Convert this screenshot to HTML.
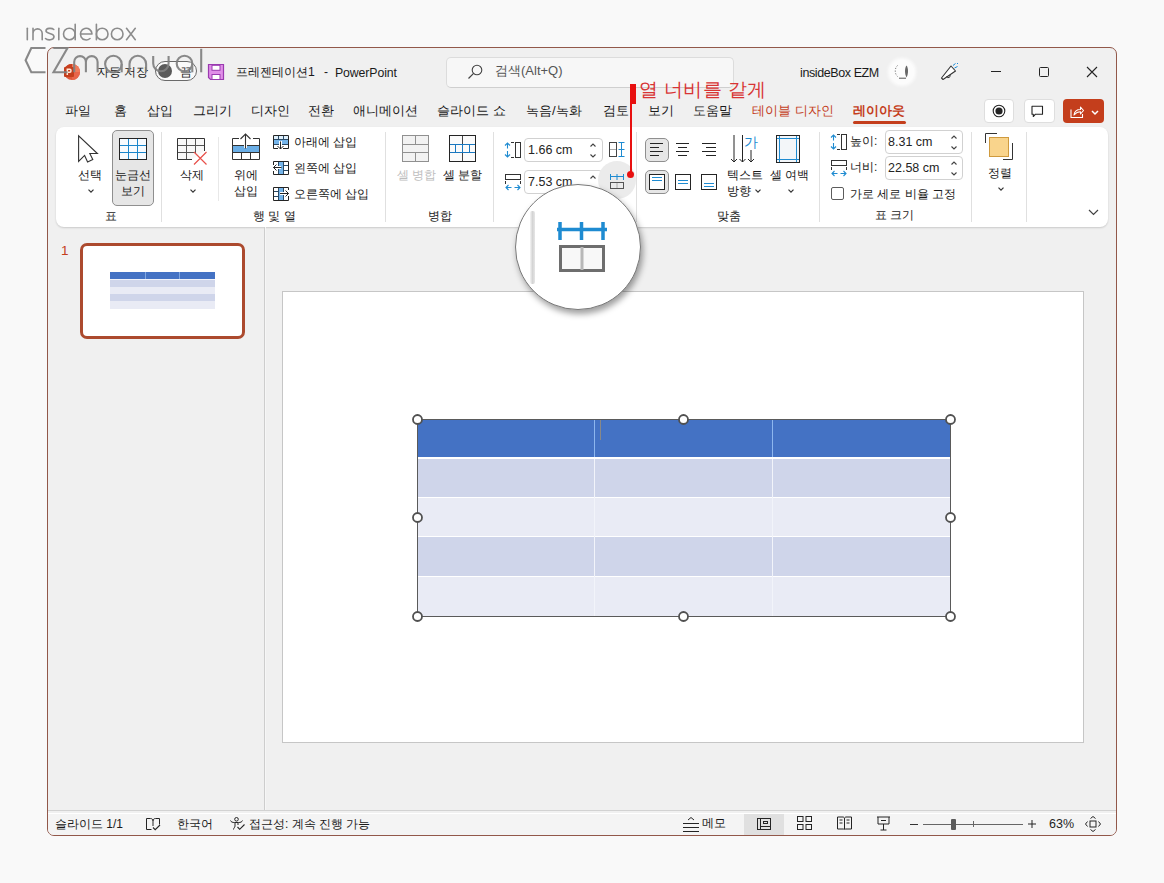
<!DOCTYPE html>
<html><head><meta charset="utf-8">
<style>
*{box-sizing:border-box;margin:0;padding:0}
html,body{width:1164px;height:883px;overflow:hidden;background:#f9f9f9;font-family:"Liberation Sans",sans-serif;color:#1a1a1a}
.a{position:absolute}
.t{position:absolute;white-space:nowrap;font-size:13px;line-height:16px}
.s{position:absolute;white-space:nowrap;font-size:12px;line-height:14px;color:#1a1a1a}
#win{position:absolute;left:47px;top:47px;width:1070px;height:789px;border:1px solid #92584a;border-radius:7px;background:#f0f0f0;overflow:hidden}
#ribbon{position:absolute;left:56px;top:127px;width:1052px;height:100px;background:#fff;border-radius:8px;box-shadow:0 1px 2px rgba(0,0,0,.16)}
.sep{position:absolute;width:1px;background:#e0e0e0}
svg{position:absolute;overflow:visible}
.inp{position:absolute;background:#fff;border:1px solid #d1d1d1;border-radius:4px}
.chev{position:absolute;width:4.5px;height:4.5px;border-right:1.2px solid #424242;border-bottom:1.2px solid #424242;transform:rotate(45deg)}
</style></head><body>
<div id="win"></div>

<!-- ===== TITLE BAR ===== -->
<svg style="left:63px;top:63px" width="18" height="18" viewBox="0 0 18 18">
 <circle cx="9" cy="9" r="8" fill="#e0583a"/>
 <path d="M9 1 A8 8 0 0 1 17 9 L9 9Z" fill="#f07a5a"/>
 <path d="M17 9 A8 8 0 0 1 9 17 L9 9Z" fill="#e8654a"/>
 <path d="M9 1 A8 8 0 0 0 1.5 6 L9 9Z" fill="#c9401f"/>
 <rect x="1" y="4" width="10" height="10" rx="1" fill="#c43e1c"/>
 <path d="M4.3 12 V6.3 H6.8 C8.4 6.3 8.4 9.3 6.8 9.3 H4.3" fill="none" stroke="#ffe8d8" stroke-width="1.5"/>
</svg>
<div class="t" style="left:97px;top:63.5px;font-size:12px">자동 저장</div>
<div class="a" style="left:155px;top:61px;width:42px;height:20px;border:1px solid #6a6a6a;border-radius:10px;background:#fafafa"></div>
<div class="a" style="left:158px;top:64px;width:14px;height:14px;border-radius:7px;background:#5a5a5a"></div>
<div class="t" style="left:179.5px;top:63.5px;font-size:12px">끔</div>
<svg style="left:207px;top:63px" width="18" height="18" viewBox="0 0 18 18">
 <path d="M1.5 1.5 H16.5 V16.5 H3.5 L1.5 14.5Z" fill="#e08ee8" stroke="#9a3ab0" stroke-width="1.2"/>
 <rect x="5" y="2.3" width="8" height="5" fill="#fff" stroke="#9a3ab0" stroke-width="1"/>
 <rect x="5" y="11.5" width="8" height="5" fill="#fff" stroke="#9a3ab0" stroke-width="1"/>
</svg>
<div class="t" style="left:236px;top:64px;font-size:12.2px">프레젠테이션1</div><div class="t" style="left:324px;top:64px;font-size:12px">-</div><div class="t" style="left:335px;top:65px;font-size:12.3px;letter-spacing:-0.1px">PowerPoint</div>

<div class="a" style="left:446px;top:57px;width:288px;height:31px;background:#f7f7f7;border:1px solid #dcdcdc;border-bottom-color:#cfcfcf;border-radius:5px"></div>
<svg style="left:467px;top:64px" width="16" height="16" viewBox="0 0 16 16">
 <circle cx="10" cy="6" r="4.8" fill="none" stroke="#424242" stroke-width="1.1"/>
 <path d="M6.6 9.4 L1.5 14.5" stroke="#424242" stroke-width="1.2"/>
</svg>
<div class="t" style="left:495px;top:62.5px;color:#555">검색(Alt+Q)</div>

<div class="t" style="left:800px;top:64.8px;font-size:12.5px;letter-spacing:-0.4px">insideBox EZM</div>
<div class="a" style="left:890px;top:60px;width:24px;height:24px;border-radius:12px;background:#fcfcfc;box-shadow:0 0 3px 2px #fcfcfc"></div>
<svg style="left:894px;top:64px" width="18" height="16" viewBox="0 0 18 16">
 <path d="M3.5 1.5 C0.5 4.5 0.5 9.5 3.5 12.5" fill="none" stroke="#777" stroke-width="1" stroke-dasharray="1.2 1.6"/>
 <path d="M5 14.2 H12" stroke="#555" stroke-width="1"/>
 <path d="M12.5 1.5 C14.5 4 14.5 10 12.5 13.5 C10.5 10 10.5 4 12.5 1.5Z" fill="#666"/>
</svg>
<svg style="left:940px;top:63px" width="20" height="18" viewBox="0 0 20 18">
 <path d="M1.5 15 L11 3 L15.5 8 L3 16.5 Z" fill="#fff" stroke="#333" stroke-width="1.1" stroke-linejoin="round"/>
 <path d="M6.5 13.5 A1.8 1.8 0 0 0 10 12" fill="none" stroke="#333" stroke-width="1"/>
 <path d="M13 2.5 L15.5 0.5 M14.5 5 L17.5 3.5 M17 1 L18 0" stroke="#1a8bd8" stroke-width="1"/>
</svg>
<div class="a" style="left:991px;top:70.6px;width:10px;height:1.2px;background:#242424"></div>
<div class="a" style="left:1039px;top:67px;width:10px;height:10px;border:1.2px solid #242424;border-radius:1.5px"></div>
<svg style="left:1087px;top:67px" width="10" height="10" viewBox="0 0 10 10"><path d="M0 0 L10 10 M10 0 L0 10" stroke="#242424" stroke-width="1.1"/></svg>

<!-- ===== MENU TABS ===== -->
<div class="t" style="left:65px;top:103px">파일</div>
<div class="t" style="left:114px;top:103px">홈</div>
<div class="t" style="left:147px;top:103px">삽입</div>
<div class="t" style="left:193px;top:103px">그리기</div>
<div class="t" style="left:251px;top:103px">디자인</div>
<div class="t" style="left:308px;top:103px">전환</div>
<div class="t" style="left:353px;top:103px">애니메이션</div>
<div class="t" style="left:437px;top:103px">슬라이드 쇼</div>
<div class="t" style="left:526px;top:103px">녹음/녹화</div>
<div class="t" style="left:603px;top:103px">검토</div>
<div class="t" style="left:648px;top:103px">보기</div>
<div class="t" style="left:693px;top:103px">도움말</div>
<div class="t" style="left:752px;top:103px;color:#c43e1c">테이블 디자인</div>
<div class="t" style="left:853px;top:103px;color:#c43e1c;font-weight:bold">레이아웃</div>
<div class="a" style="left:853px;top:121px;width:53px;height:3px;border-radius:2px;background:#c43e1c"></div>

<div class="a" style="left:984px;top:99px;width:30px;height:24px;background:#fff;border:1px solid #dedede;border-radius:4px"></div>
<svg style="left:992px;top:104px" width="14" height="14" viewBox="0 0 14 14"><circle cx="7" cy="7" r="5.8" fill="none" stroke="#242424" stroke-width="1.1"/><circle cx="7" cy="7" r="3.6" fill="#242424"/></svg>
<div class="a" style="left:1024px;top:99px;width:31px;height:24px;background:#fff;border:1px solid #dedede;border-radius:4px"></div>
<svg style="left:1031px;top:105px" width="13" height="13" viewBox="0 0 13 13"><path d="M1 1.2 H11.5 V9.2 H4.5 L2.3 11.5 V9.2 H1Z" fill="none" stroke="#242424" stroke-width="1.1" stroke-linejoin="round"/></svg>
<div class="a" style="left:1063px;top:99px;width:41px;height:24px;background:#c43e1c;border-radius:4px"></div>
<svg style="left:1070px;top:104px" width="32" height="16" viewBox="0 0 32 16">
 <path d="M1 5.5 V13.5 H12.5 V10" fill="none" stroke="#fff" stroke-width="1.1"/>
 <path d="M4 11 C4.5 7.5 7 5.5 10.5 5.5 V3 L13.5 6.5 L10.5 10 V7.8 C8 7.8 5.8 9 4 11Z" fill="none" stroke="#fff" stroke-width="1.1" stroke-linejoin="round"/>
 <path d="M22 7 L25 10 L28 7" fill="none" stroke="#fff" stroke-width="1.5"/>
</svg>

<!-- ===== RIBBON ===== -->
<div id="ribbon"></div>
<!-- group 표 -->
<svg style="left:77px;top:135px" width="22" height="29" viewBox="0 0 22 29">
 <path d="M1.6 0.8 L1.6 26.4 L7.6 20.4 L10.6 27 L15.8 24.6 L12.8 18.5 L20.4 18.5 Z" fill="#fff" stroke="#333" stroke-width="1.1" stroke-linejoin="miter"/>
</svg>
<div class="s" style="left:78px;top:168px">선택</div>
<svg style="left:87.6px;top:188.5px" width="6" height="4" viewBox="0 0 6 4"><path d="M0.5 0.7 L3 3.2 L5.5 0.7" fill="none" stroke="#333" stroke-width="1.2"/></svg>
<div class="a" style="left:112px;top:130px;width:42px;height:76px;background:#e6e6e6;border:1px solid #8f8f8f;border-radius:5px"></div>
<svg style="left:119px;top:138px" width="29" height="23" viewBox="0 0 29 23">
 <rect x="0.5" y="0.5" width="27" height="21" fill="#f7fbff" stroke="#242424" stroke-width="1"/>
 <path d="M1 7.5 H27 M1 14.5 H27 M9.5 1 V21 M18.5 1 V21" stroke="#1a86cc" stroke-width="1"/>
</svg>
<div class="s" style="left:115px;top:168px">눈금선</div>
<div class="s" style="left:121px;top:184px">보기</div>
<div class="s" style="left:105px;top:209px">표</div>
<div class="sep" style="left:161px;top:132px;height:90px"></div>

<!-- group 행 및 열 -->
<svg style="left:177px;top:138px" width="32" height="28" viewBox="0 0 32 28">
 <path d="M15 21.5 H0.5 V0.5 H27.5 V13" fill="#f8f8f8" stroke="#333" stroke-width="1"/>
 <path d="M1 7.5 H27 M1 14.5 H19 M9.5 1 V21 M18.5 1 V16" stroke="#555" stroke-width="1"/>
 <path d="M17 14 L29.5 26.5 M29.5 14 L17 26.5" stroke="#e8504a" stroke-width="1.2"/>
</svg>
<div class="s" style="left:180px;top:168px">삭제</div>
<svg style="left:189.6px;top:188.5px" width="6" height="4" viewBox="0 0 6 4"><path d="M0.5 0.7 L3 3.2 L5.5 0.7" fill="none" stroke="#333" stroke-width="1.2"/></svg>
<div class="sep" style="left:218px;top:137px;height:64px;background:#e8e8e8"></div>
<svg style="left:232px;top:133px" width="28" height="27" viewBox="0 0 28 27">
 <path d="M0.5 26.5 V5.5 H7 M21 5.5 H27.5 V26.5 H0.5" fill="none" stroke="#333" stroke-width="1"/>
 <rect x="0.5" y="12.5" width="27" height="7" fill="#6aaee6" stroke="#333" stroke-width="1"/>
 <path d="M9.5 19.5 V26.5 M18.5 19.5 V26.5" stroke="#333" stroke-width="1"/>
 <path d="M13.5 15 V1.5" stroke="#fff" stroke-width="3"/>
 <path d="M13.5 15.5 V1 M8.5 6 L13.5 1 L18.5 6" fill="none" stroke="#333" stroke-width="1.1"/>
</svg>
<div class="s" style="left:234px;top:168px">위에</div>
<div class="s" style="left:234px;top:184px">삽입</div>
<svg style="left:273px;top:135px" width="16" height="15" viewBox="0 0 16 15">
 <rect x="1" y="1" width="14" height="3.5" fill="#dff0fc"/>
 <rect x="1" y="4.5" width="14" height="5" fill="#74b4ea"/>
 <path d="M5 13.5 H0.5 V0.5 H15.5 V13.5 H10" fill="none" stroke="#242424" stroke-width="1"/>
 <path d="M1 4.5 H15 M1 9.5 H15 M5.5 1 V4.5 M10.5 1 V4.5" stroke="#2a4a66" stroke-width="1"/>
 <path d="M7.5 6 V13.5" stroke="#fff" stroke-width="3"/>
 <path d="M7.5 6.5 V14 M4.5 11 L7.5 14 L10.5 11" fill="none" stroke="#242424" stroke-width="1"/>
</svg>
<div class="s" style="left:294px;top:135px">아래에 삽입</div>
<svg style="left:273px;top:161px" width="16" height="14" viewBox="0 0 16 14">
 <rect x="5" y="1" width="5" height="12" fill="#74b4ea"/>
 <path d="M0.5 4 V0.5 H15.5 V13.5 H0.5 V10" fill="none" stroke="#242424" stroke-width="1"/>
 <path d="M5.5 1 V13 M10.5 1 V13 M10.5 4.5 H15 M10.5 9.5 H15" stroke="#2a4a66" stroke-width="1"/>
 <path d="M1 6.5 H8" stroke="#fff" stroke-width="3"/>
 <path d="M8.5 6.5 H0.5 M3.5 3.5 L0.5 6.5 L3.5 9.5" fill="none" stroke="#242424" stroke-width="1"/>
</svg>
<div class="s" style="left:294px;top:161px">왼쪽에 삽입</div>
<svg style="left:273px;top:187px" width="16" height="14" viewBox="0 0 16 14">
 <rect x="5.5" y="1" width="5" height="12" fill="#74b4ea"/>
 <path d="M15.5 3 V0.5 H0.5 V13.5 H15.5 V9" fill="none" stroke="#242424" stroke-width="1"/>
 <path d="M5.5 1 V13 M10.5 1 V13 M1 4.5 H5.5 M1 9.5 H5.5" stroke="#2a4a66" stroke-width="1"/>
 <path d="M7 6.5 H15" stroke="#fff" stroke-width="3"/>
 <path d="M7 6.5 H15.5 M12.5 3.5 L15.5 6.5 L12.5 9.5" fill="none" stroke="#242424" stroke-width="1"/>
</svg>
<div class="s" style="left:294px;top:187px">오른쪽에 삽입</div>
<div class="s" style="left:253px;top:209px">행 및 열</div>
<div class="sep" style="left:385px;top:132px;height:90px"></div>

<!-- group 병합 -->
<svg style="left:402px;top:135px" width="27" height="27" viewBox="0 0 27 27">
 <rect x="0.5" y="0.5" width="26" height="26" fill="#f2f2f2" stroke="#909090" stroke-width="1"/>
 <path d="M1 9.5 H26 M1 17.5 H26 M13.5 1 V9 M13.5 18 V26" stroke="#909090" stroke-width="1"/>
</svg>
<div class="s" style="left:397px;top:168px;color:#bdbdbd">셀 병합</div>
<svg style="left:449px;top:135px" width="27" height="27" viewBox="0 0 27 27">
 <rect x="0.5" y="0.5" width="26" height="26" fill="#fbfbfb" stroke="#242424" stroke-width="1"/>
 <path d="M13.5 1 V9 M13.5 18 V26" stroke="#444" stroke-width="1"/>
 <path d="M1 9.5 H26 M1 17.5 H26 M6.5 10 V17 M13.5 10 V17 M20.5 10 V17" stroke="#1a78c0" stroke-width="1"/>
</svg>
<div class="s" style="left:443px;top:168px">셀 분할</div>
<div class="s" style="left:428px;top:209px">병합</div>
<div class="sep" style="left:493px;top:132px;height:90px"></div>

<!-- group cell size -->
<svg style="left:504px;top:142px" width="18" height="17" viewBox="0 0 18 17">
 <path d="M3.5 1 V6.5 M1 3.5 L3.5 1 L6 3.5 M3.5 9 V15 M1 12.5 L3.5 15 L6 12.5" fill="none" stroke="#1e8bd1" stroke-width="1.1"/>
 <rect x="11.5" y="0.5" width="5" height="15" fill="none" stroke="#333" stroke-width="1"/>
 <path d="M7 0.5 H10 M7 15.5 H10" stroke="#333" stroke-width="1"/>
</svg>
<div class="inp" style="left:524px;top:138px;width:79px;height:24px"></div>
<div class="a" style="left:528px;top:142px;font-size:12.5px;line-height:16px;color:#242424">1.66 cm</div>
<svg style="left:590px;top:142.5px" width="6" height="4" viewBox="0 0 6 4"><path d="M0.5 3.5 L3 1 L5.5 3.5" fill="none" stroke="#424242" stroke-width="1.1"/></svg>
<svg style="left:590px;top:154px" width="6" height="4" viewBox="0 0 6 4"><path d="M0.5 0.5 L3 3 L5.5 0.5" fill="none" stroke="#424242" stroke-width="1.1"/></svg>
<svg style="left:505px;top:174px" width="17" height="16" viewBox="0 0 17 16">
 <rect x="0.5" y="0.5" width="15" height="5" fill="none" stroke="#333" stroke-width="1"/>
 <path d="M0.5 7 V10 M15.5 7 V10" stroke="#333" stroke-width="1"/>
 <path d="M1 13.5 H6.5 M3.5 11 L1 13.5 L3.5 16 M9.5 13.5 H15 M12.5 11 L15 13.5 L12.5 16" fill="none" stroke="#1e8bd1" stroke-width="1.1"/>
</svg>
<div class="inp" style="left:524px;top:170px;width:79px;height:24px"></div>
<div class="a" style="left:528px;top:174px;font-size:12.5px;line-height:16px;color:#242424">7.53 cm</div>
<svg style="left:590px;top:174.5px" width="6" height="4" viewBox="0 0 6 4"><path d="M0.5 3.5 L3 1 L5.5 3.5" fill="none" stroke="#424242" stroke-width="1.1"/></svg>
<svg style="left:609px;top:142px" width="17" height="16" viewBox="0 0 17 16">
 <rect x="0.5" y="0.5" width="7" height="14" fill="none" stroke="#444" stroke-width="1"/>
 <path d="M1 7.5 H7" stroke="#aaa" stroke-width="1"/>
 <path d="M12.5 0 V15 M9.5 0.5 H15.5 M9.5 7.5 H15.5 M9.5 14.5 H15.5" stroke="#1e8bd1" stroke-width="1"/>
</svg>
<div class="a" style="left:598px;top:161px;width:38px;height:38px;border-radius:19px;background:#ebebeb"></div>
<svg style="left:610px;top:174px" width="15" height="16" viewBox="0 0 15 16">
 <path d="M0 2.5 H14 M0.5 0 V6 M7 0 V6 M13.5 0 V6" stroke="#1e8bd1" stroke-width="1"/>
 <rect x="0.5" y="8.5" width="13" height="6" fill="none" stroke="#555" stroke-width="1"/>
 <path d="M7 9 V14" stroke="#aaa" stroke-width="1"/>
</svg>
<div class="sep" style="left:636px;top:132px;height:90px"></div>

<!-- group 맞춤 -->
<div class="a" style="left:645px;top:138px;width:24px;height:24px;background:#e6e6e6;border:1px solid #8f8f8f;border-radius:5px"></div>
<svg style="left:649px;top:143px" width="16" height="14" viewBox="0 0 16 14"><path d="M1 0.5 H14 M1 4.5 H10 M1 8.5 H14 M1 12.5 H10" stroke="#242424" stroke-width="1"/></svg>
<svg style="left:675px;top:143px" width="16" height="14" viewBox="0 0 16 14"><path d="M1 0.5 H14 M3 4.5 H12 M1 8.5 H14 M3 12.5 H12" stroke="#242424" stroke-width="1"/></svg>
<svg style="left:701px;top:143px" width="16" height="14" viewBox="0 0 16 14"><path d="M1 0.5 H15 M5 4.5 H15 M1 8.5 H15 M5 12.5 H15" stroke="#242424" stroke-width="1"/></svg>
<div class="a" style="left:645px;top:170px;width:24px;height:24px;background:#e6e6e6;border:1px solid #8f8f8f;border-radius:5px"></div>
<svg style="left:649px;top:174px" width="16" height="16" viewBox="0 0 16 16"><rect x="0.5" y="0.5" width="15" height="15" fill="#fff" stroke="#242424"/><path d="M3 3.5 H13 M3 6.5 H13" stroke="#1e8bd1"/></svg>
<svg style="left:675px;top:174px" width="16" height="16" viewBox="0 0 16 16"><rect x="0.5" y="0.5" width="15" height="15" fill="#fff" stroke="#242424"/><path d="M3 6.5 H13 M3 9.5 H13" stroke="#1e8bd1"/></svg>
<svg style="left:701px;top:174px" width="16" height="16" viewBox="0 0 16 16"><rect x="0.5" y="0.5" width="15" height="15" fill="#fff" stroke="#242424"/><path d="M3 9.5 H13 M3 12.5 H13" stroke="#1e8bd1"/></svg>
<svg style="left:729px;top:135px" width="31" height="29" viewBox="0 0 31 29">
 <path d="M5 0 V27 M2 24 L5 27 L8 24 M13.5 0 V27 M10.5 24 L13.5 27 L16.5 24 M22 15 V27 M19 24 L22 27 L25 24" fill="none" stroke="#242424" stroke-width="1"/>
 <text x="15" y="11.5" font-size="13.5" fill="#1e8bd1" font-family="Liberation Sans">가</text>
</svg>
<div class="s" style="left:727px;top:168px">텍스트</div>
<div class="s" style="left:727px;top:184px">방향</div>
<svg style="left:755px;top:189px" width="6" height="4" viewBox="0 0 6 4"><path d="M0.5 0.7 L3 3.2 L5.5 0.7" fill="none" stroke="#333" stroke-width="1.2"/></svg>
<svg style="left:776px;top:135px" width="25" height="29" viewBox="0 0 25 29">
 <rect x="0.5" y="0.5" width="23" height="27" fill="#f3f6f9" stroke="#242424" stroke-width="1"/>
 <path d="M1 3.5 H23 M1 24.5 H23 M3.5 1 V27 M20.5 1 V27" stroke="#1e8bd1" stroke-width="1"/>
</svg>
<div class="s" style="left:770px;top:168px">셀 여백</div>
<svg style="left:787.5px;top:188.5px" width="6" height="4" viewBox="0 0 6 4"><path d="M0.5 0.7 L3 3.2 L5.5 0.7" fill="none" stroke="#333" stroke-width="1.2"/></svg>
<div class="s" style="left:717px;top:209px">맞춤</div>
<div class="sep" style="left:819px;top:132px;height:90px"></div>

<!-- group 표 크기 -->
<svg style="left:830px;top:134px" width="18" height="17" viewBox="0 0 18 17">
 <path d="M3.5 1 V6.5 M1 3.5 L3.5 1 L6 3.5 M3.5 9 V15 M1 12.5 L3.5 15 L6 12.5" fill="none" stroke="#1e8bd1" stroke-width="1.1"/>
 <rect x="11.5" y="0.5" width="5" height="15" fill="none" stroke="#333" stroke-width="1"/>
 <path d="M7 0.5 H10 M7 15.5 H10" stroke="#333" stroke-width="1"/>
</svg>
<div class="s" style="left:850px;top:134px">높이:</div>
<div class="inp" style="left:885px;top:130px;width:78px;height:24px"></div>
<div class="a" style="left:888px;top:134px;font-size:12.5px;line-height:16px;color:#242424">8.31 cm</div>
<svg style="left:951px;top:134.5px" width="6" height="4" viewBox="0 0 6 4"><path d="M0.5 3.5 L3 1 L5.5 3.5" fill="none" stroke="#424242" stroke-width="1.1"/></svg>
<svg style="left:951px;top:146px" width="6" height="4" viewBox="0 0 6 4"><path d="M0.5 0.5 L3 3 L5.5 0.5" fill="none" stroke="#424242" stroke-width="1.1"/></svg>
<svg style="left:831px;top:160px" width="17" height="16" viewBox="0 0 17 16">
 <rect x="0.5" y="0.5" width="15" height="5" fill="none" stroke="#333" stroke-width="1"/>
 <path d="M0.5 7 V10 M15.5 7 V10" stroke="#333" stroke-width="1"/>
 <path d="M1 13.5 H6.5 M3.5 11 L1 13.5 L3.5 16 M9.5 13.5 H15 M12.5 11 L15 13.5 L12.5 16" fill="none" stroke="#1e8bd1" stroke-width="1.1"/>
</svg>
<div class="s" style="left:850px;top:160px">너비:</div>
<div class="inp" style="left:885px;top:156px;width:78px;height:24px"></div>
<div class="a" style="left:888px;top:160px;font-size:12.5px;line-height:16px;color:#242424">22.58 cm</div>
<svg style="left:951px;top:160.5px" width="6" height="4" viewBox="0 0 6 4"><path d="M0.5 3.5 L3 1 L5.5 3.5" fill="none" stroke="#424242" stroke-width="1.1"/></svg>
<svg style="left:951px;top:172px" width="6" height="4" viewBox="0 0 6 4"><path d="M0.5 0.5 L3 3 L5.5 0.5" fill="none" stroke="#424242" stroke-width="1.1"/></svg>
<div class="a" style="left:831px;top:187px;width:13px;height:13px;border:1px solid #5c5c5c;border-radius:2px;background:#fff"></div>
<div class="s" style="left:850px;top:187px">가로 세로 비율 고정</div>
<div class="s" style="left:875px;top:208px">표 크기</div>
<div class="sep" style="left:971px;top:132px;height:90px"></div>

<!-- 정렬 -->
<svg style="left:985px;top:133px" width="29" height="28" viewBox="0 0 29 28">
 <path d="M0.5 10 V0.5 H12" fill="none" stroke="#333" stroke-width="1"/>
 <rect x="4.5" y="4.5" width="19" height="19" fill="#f9d48c" stroke="#cf9a3e" stroke-width="1"/>
 <path d="M27.5 10 V26.5 H18" fill="none" stroke="#333" stroke-width="1"/>
</svg>
<div class="s" style="left:988px;top:166px">정렬</div>
<svg style="left:997.5px;top:187px" width="6" height="4" viewBox="0 0 6 4"><path d="M0.5 0.7 L3 3.2 L5.5 0.7" fill="none" stroke="#333" stroke-width="1.2"/></svg>
<div class="sep" style="left:1026px;top:132px;height:90px"></div>
<svg style="left:1088px;top:209px" width="11" height="7" viewBox="0 0 11 7"><path d="M1 1 L5.5 5.5 L10 1" fill="none" stroke="#424242" stroke-width="1.2"/></svg>

<!-- ===== CALLOUT ===== -->
<div class="a" style="left:630px;top:84px;width:6px;height:20px;background:#e81010"></div>
<div class="a" style="left:630px;top:84px;width:1.5px;height:90px;background:#e81010"></div>
<div class="a" style="left:627px;top:171px;width:7px;height:7px;border-radius:4px;background:#e81010"></div>
<div class="a" style="left:639px;top:78px;font-size:19px;line-height:23px;letter-spacing:0.4px;color:#d83434;white-space:nowrap">열 너비를 같게</div>

<!-- ===== LEFT PANE ===== -->
<div class="a" style="left:264px;top:227px;width:1px;height:583px;background:#cdcdcd"></div><div class="a" style="left:265px;top:227px;width:1px;height:583px;background:#f6f6f6"></div>
<div class="a" style="left:61px;top:242.5px;font-size:13.5px;line-height:16px;color:#c43e1c">1</div>
<div class="a" style="left:80px;top:243px;width:165px;height:96px;border:3px solid #ac4a2e;border-radius:7px;background:#fff"></div>
<div class="a" style="left:110px;top:272px;width:105px;height:7px;background:#4472c4"></div>
<div class="a" style="left:110px;top:280px;width:105px;height:7px;background:#cfd5ea"></div><div class="a" style="left:110px;top:279px;width:105px;height:1px;background:#f0f2fa"></div><div class="a" style="left:145px;top:272px;width:1px;height:7px;background:#7fa6e0"></div><div class="a" style="left:179px;top:272px;width:1px;height:7px;background:#7fa6e0"></div>
<div class="a" style="left:110px;top:287px;width:105px;height:7px;background:#e9ebf5"></div>
<div class="a" style="left:110px;top:294px;width:105px;height:7px;background:#cfd5ea"></div>
<div class="a" style="left:110px;top:301px;width:105px;height:8px;background:#e9ebf5"></div>

<!-- ===== SLIDE ===== -->
<div class="a" style="left:282px;top:291px;width:802px;height:452px;background:#fff;border:1px solid #c6c6c6"></div>
<div class="a" style="left:417px;top:419px;width:534px;height:198px;background:#e9ebf5"></div>
<div class="a" style="left:417px;top:419px;width:534px;height:38px;background:#4472c4"></div>
<div class="a" style="left:417px;top:459px;width:534px;height:38px;background:#cfd5ea"></div>
<div class="a" style="left:417px;top:537px;width:534px;height:39px;background:#cfd5ea"></div>
<div class="a" style="left:417px;top:457px;width:534px;height:2px;background:#fff"></div>
<div class="a" style="left:417px;top:497px;width:534px;height:1px;background:#fff"></div>
<div class="a" style="left:417px;top:536px;width:534px;height:1px;background:#fff"></div>
<div class="a" style="left:417px;top:576px;width:534px;height:1px;background:#fff"></div>
<div class="a" style="left:593.5px;top:459px;width:1.5px;height:157px;background:#f2f4fa"></div>
<div class="a" style="left:771.5px;top:459px;width:1.5px;height:157px;background:#f2f4fa"></div>
<div class="a" style="left:593.5px;top:420px;width:1.5px;height:37px;background:#8db6ee"></div>
<div class="a" style="left:771.5px;top:420px;width:1.5px;height:37px;background:#8db6ee"></div>
<div class="a" style="left:600px;top:420px;width:1px;height:20px;background:#888"></div>
<div class="a" style="left:417px;top:419px;width:534px;height:198px;border:1px solid #5a5a5a"></div>
<svg style="left:0;top:0" width="1164" height="883">
 <g fill="#fff" stroke="#505050" stroke-width="1.8">
 <circle cx="417.5" cy="419.5" r="4.5"/><circle cx="683.5" cy="419.5" r="4.5"/><circle cx="950.5" cy="419.5" r="4.5"/>
 <circle cx="417.5" cy="517.5" r="4.5"/><circle cx="950.5" cy="517.5" r="4.5"/>
 <circle cx="417.5" cy="616.5" r="4.5"/><circle cx="683.5" cy="616.5" r="4.5"/><circle cx="950.5" cy="616.5" r="4.5"/>
 </g>
</svg>

<!-- ===== MAGNIFIER ===== -->
<div class="a" style="left:515px;top:184px;width:126px;height:126px;border-radius:63px;background:#fff;border:1px solid #7a7a7a;box-shadow:2px 4px 6px rgba(0,0,0,.38)"></div>
<div class="a" style="left:530px;top:211px;width:5px;height:73px;border-radius:2px;background:linear-gradient(90deg,#f4f4f4,#d4d4d4 50%,#e6e6e6)"></div>
<svg style="left:556px;top:221px" width="52" height="52" viewBox="0 0 52 52">
 <path d="M1 8.5 H51 M4 1 V19 M25.5 1 V19 M47 1 V19" stroke="#1e8bd1" stroke-width="3.5"/>
 <rect x="4.5" y="25.5" width="43" height="24" fill="#f8f8f8" stroke="#6e6e6e" stroke-width="3"/>
 <path d="M26 26 V49" stroke="#b8b8b8" stroke-width="3"/>
</svg>

<!-- ===== STATUS BAR ===== -->
<div class="a" style="left:48px;top:813px;width:1068px;height:22px;background:#f4f4f4;border-radius:0 0 6px 6px;border-top:1px solid #fff"></div>
<div class="a" style="left:48px;top:810px;width:1068px;height:1px;background:#d2d2d2"></div>
<div class="s" style="left:55px;top:817px">슬라이드 1/1</div>
<svg style="left:146px;top:818px" width="15" height="13" viewBox="0 0 15 13">
 <path d="M5.5 11.5 H0.5 V0.5 H4.5 C6 0.5 7 1.5 7 3 V8 M7 3 C7 1.5 8 0.5 9.5 0.5 H13.5 V6.5" fill="none" stroke="#242424" stroke-width="1"/>
 <path d="M7 9.5 L9.2 11.7 L14 7" fill="none" stroke="#242424" stroke-width="1.1"/>
</svg>
<div class="s" style="left:177px;top:817px">한국어</div>
<svg style="left:229px;top:817px" width="17" height="14" viewBox="0 0 17 14">
 <circle cx="7.5" cy="2.3" r="1.8" fill="none" stroke="#242424" stroke-width="1"/>
 <path d="M1.5 3.5 C2 5 3.5 5.5 5.5 5.5 H9.5 C11.5 5.5 13 5 13.5 3.5" fill="none" stroke="#242424" stroke-width="1"/>
 <path d="M6 5.5 V9 C6 10.5 4.5 11 4.5 12.5 M9 5.5 V8" fill="none" stroke="#242424" stroke-width="1"/>
 <path d="M8.5 10 L10.7 12.3 L15.5 7.5" fill="none" stroke="#242424" stroke-width="1.1"/>
</svg>
<div class="s" style="left:249px;top:817px">접근성: 계속 진행 가능</div>

<svg style="left:683px;top:817px" width="16" height="15" viewBox="0 0 16 15">
 <path d="M5 3 L8 0.5 L11 3" fill="none" stroke="#242424" stroke-width="1"/>
 <path d="M0 6.5 H16 M0 10.5 H16 M0 14.5 H16" stroke="#242424" stroke-width="1"/>
</svg>
<div class="s" style="left:702px;top:816px">메모</div>
<div class="a" style="left:744px;top:814px;width:40px;height:21px;background:#e0e0e0"></div>
<svg style="left:757px;top:818px" width="15" height="13" viewBox="0 0 15 13">
 <rect x="0.5" y="0.5" width="13" height="11" fill="none" stroke="#242424" stroke-width="1"/>
 <path d="M3.5 1 V11.5 M4 8.5 H13.5" stroke="#242424" stroke-width="1"/>
 <rect x="6.5" y="3.5" width="4" height="2" fill="none" stroke="#242424" stroke-width="1"/>
</svg>
<svg style="left:797px;top:816px" width="15" height="14" viewBox="0 0 15 14"><rect x="0.5" y="0.5" width="5.5" height="5" fill="none" stroke="#242424"/><rect x="9" y="0.5" width="5.5" height="5" fill="none" stroke="#242424"/><rect x="0.5" y="8.5" width="5.5" height="5" fill="none" stroke="#242424"/><rect x="9" y="8.5" width="5.5" height="5" fill="none" stroke="#242424"/></svg>
<svg style="left:837px;top:816px" width="15" height="14" viewBox="0 0 15 14"><path d="M0.5 1 H6 C7 1 7.5 2 7.5 3 C7.5 2 8 1 9 1 H14.5 V13 H9 C8 13 7.5 13.5 7.5 13.5 C7.5 13.5 7 13 6 13 H0.5Z M7.5 3 V13 M2.5 4 H5.5 M2.5 7 H5.5 M9.5 4 H12.5 M9.5 7 H12.5" fill="none" stroke="#242424"/></svg>
<svg style="left:876px;top:816px" width="15" height="15" viewBox="0 0 15 15"><path d="M1 1 H14 M2 1 V8 H13 V1 M7.5 8 V14 M4.5 14 H10.5 M5 4.5 H10" fill="none" stroke="#242424"/></svg>
<div class="a" style="left:910px;top:824px;width:8px;height:1px;background:#333"></div>
<div class="a" style="left:923px;top:824px;width:100px;height:1px;background:#666"></div>
<div class="a" style="left:973px;top:821px;width:1px;height:6px;background:#666"></div>
<div class="a" style="left:951px;top:818.5px;width:5px;height:11px;background:#5a5a5a;border-radius:1px"></div>
<svg style="left:1027px;top:819px" width="10" height="10" viewBox="0 0 10 10"><path d="M1 5 H9 M5 1 V9" stroke="#242424"/></svg>
<div class="a" style="left:1049px;top:816px;font-size:12.5px;line-height:16px;color:#242424">63%</div>
<svg style="left:1085px;top:816px" width="16" height="16" viewBox="0 0 16 16"><rect x="5" y="5" width="6" height="6" fill="none" stroke="#242424"/><path d="M5.5 2.5 L8 0.5 L10.5 2.5 M5.5 13.5 L8 15.5 L10.5 13.5 M2.5 5.5 L0.5 8 L2.5 10.5 M13.5 5.5 L15.5 8 L13.5 10.5" fill="none" stroke="#242424"/></svg>

<!-- ===== WATERMARK ===== -->
<svg class="wm" style="left:0;top:0" width="220" height="90" viewBox="0 0 220 90">
 <g fill="none" stroke="#8c8c8c" stroke-width="1.6" stroke-linecap="round" stroke-linejoin="round">
  <path d="M27.3 28.3 V39.7"/>
  <path d="M33 39.7 V33.5 A4.6 4.6 0 0 1 42.2 33.5 V39.7 M33 28.3 V33.5"/>
  <path d="M53.8 29.5 C52 27.8 46 27.8 46 31 C46 34 54 33 54 36.5 C54 40.5 47.5 40.5 45.5 38.5"/>
  <path d="M58.8 28.3 V39.7"/>
  <circle cx="69.3" cy="34" r="5.8"/><path d="M75.2 24.4 V39.7"/>
  <path d="M80.7 34 H92 A5.8 5.8 0 1 0 90 38.5"/>
  <circle cx="102.2" cy="34" r="5.8"/><path d="M96.4 24.4 V39.7"/>
  <circle cx="117.2" cy="34" r="5.8"/>
  <path d="M126.5 28.3 L135.3 39.7 M135.3 28.3 L126.5 39.7"/>
 </g>
 <g fill="none" stroke="#808080" stroke-width="2.1" stroke-linecap="butt" stroke-linejoin="miter" opacity="0.92">
  <path d="M45.5 48 H31.3 L25.6 60.2 L31.3 72.3 H45.5"/>
  <path d="M53.3 48 H67.5 L53.5 72.3 H67.5"/>
  <path d="M74.2 72.3 V62 A5.85 5.85 0 0 1 85.9 62 V72.3 M85.9 62 A5.85 5.85 0 0 1 97.6 62 V72.3"/>
  <circle cx="113.4" cy="64.1" r="8.3"/><path d="M121.7 64 V72.3"/>
  <path d="M129.5 72.3 V64.1 A8.3 8.3 0 0 1 146.1 64.1 V72.3"/>
  <path d="M153.2 56 V63.5 A7.7 7.7 0 0 0 168.6 63.5 V56"/>
  <circle cx="184.5" cy="63.6" r="7.8"/><path d="M192.3 63.6 V72.3"/>
  <path d="M201.2 48.8 V72.3"/>
 </g>
</svg>
</body></html>
